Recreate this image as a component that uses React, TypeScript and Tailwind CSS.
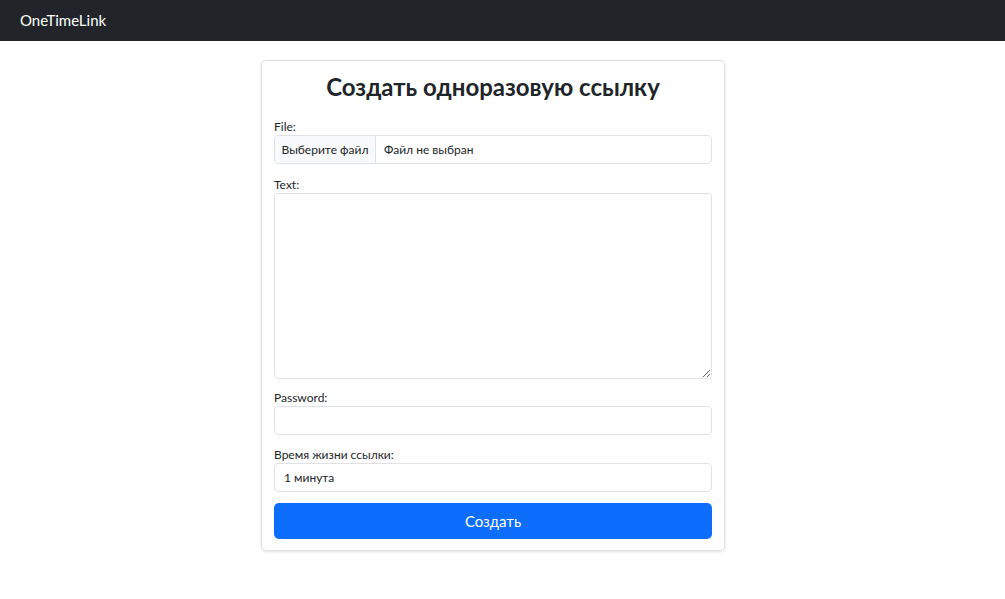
import React from 'react';

const font = { fontFamily: 'Lato, "Noto Sans", sans-serif' };

export default function App() {
  return (
    <div className="min-h-[599px] bg-white text-[#212529] font-['Lato','Noto_Sans',sans-serif]">
      <nav className="h-[41px] bg-[#212529] flex items-center px-[20px]">
        <span className="text-white text-[15px]">OneTimeLink</span>
      </nav>

      <div className="flex justify-center pt-[19px] pr-[19px]">
        <div className="w-[464px] border border-[#dee2e6] rounded-[5px] shadow-[0_1px_3px_rgba(0,0,0,0.12)] px-[12px] pt-[11px] pb-[11px]">
          <h2 className="text-center text-[24px] font-bold leading-[29px] mb-[19px]">Создать одноразовую ссылку</h2>

          <div className="mb-[14px]">
            <label className="block text-[12px] leading-[14px] mb-[1px]">File:</label>
            <div className="flex h-[29px] border border-[#dee2e6] rounded-[4px] overflow-hidden text-[12px]">
              <div className="w-[101px] shrink-0 bg-[#f8f9fa] border-r border-[#dee2e6] flex items-center justify-center">Выберите файл</div>
              <div className="px-[8px] flex items-center">Файл не выбран</div>
            </div>
          </div>

          <div className="mb-[12px]">
            <label className="block text-[12px] leading-[14px] mb-[1px]">Text:</label>
            <textarea className="block w-full h-[186px] border border-[#dee2e6] rounded-[4px] outline-none text-[12px] px-[9px] py-[5px]" />
          </div>

          <div className="mb-[13px]">
            <label className="block text-[12px] leading-[14px] mb-[1px]">Password:</label>
            <input type="password" className="block w-full h-[29px] border border-[#dee2e6] rounded-[4px] outline-none text-[12px] px-[9px]" />
          </div>

          <div className="mb-[11px]">
            <label className="block text-[12px] leading-[14px] mb-[1px]">Время жизни ссылки:</label>
            <div className="flex items-center h-[29px] border border-[#dee2e6] rounded-[4px] text-[12px] px-[9px]">1 минута</div>
          </div>

          <button className="w-full h-[36px] bg-[#0d6efd] text-white text-[15px] rounded-[5px]" style={font}>Создать</button>
        </div>
      </div>
    </div>
  );
}
